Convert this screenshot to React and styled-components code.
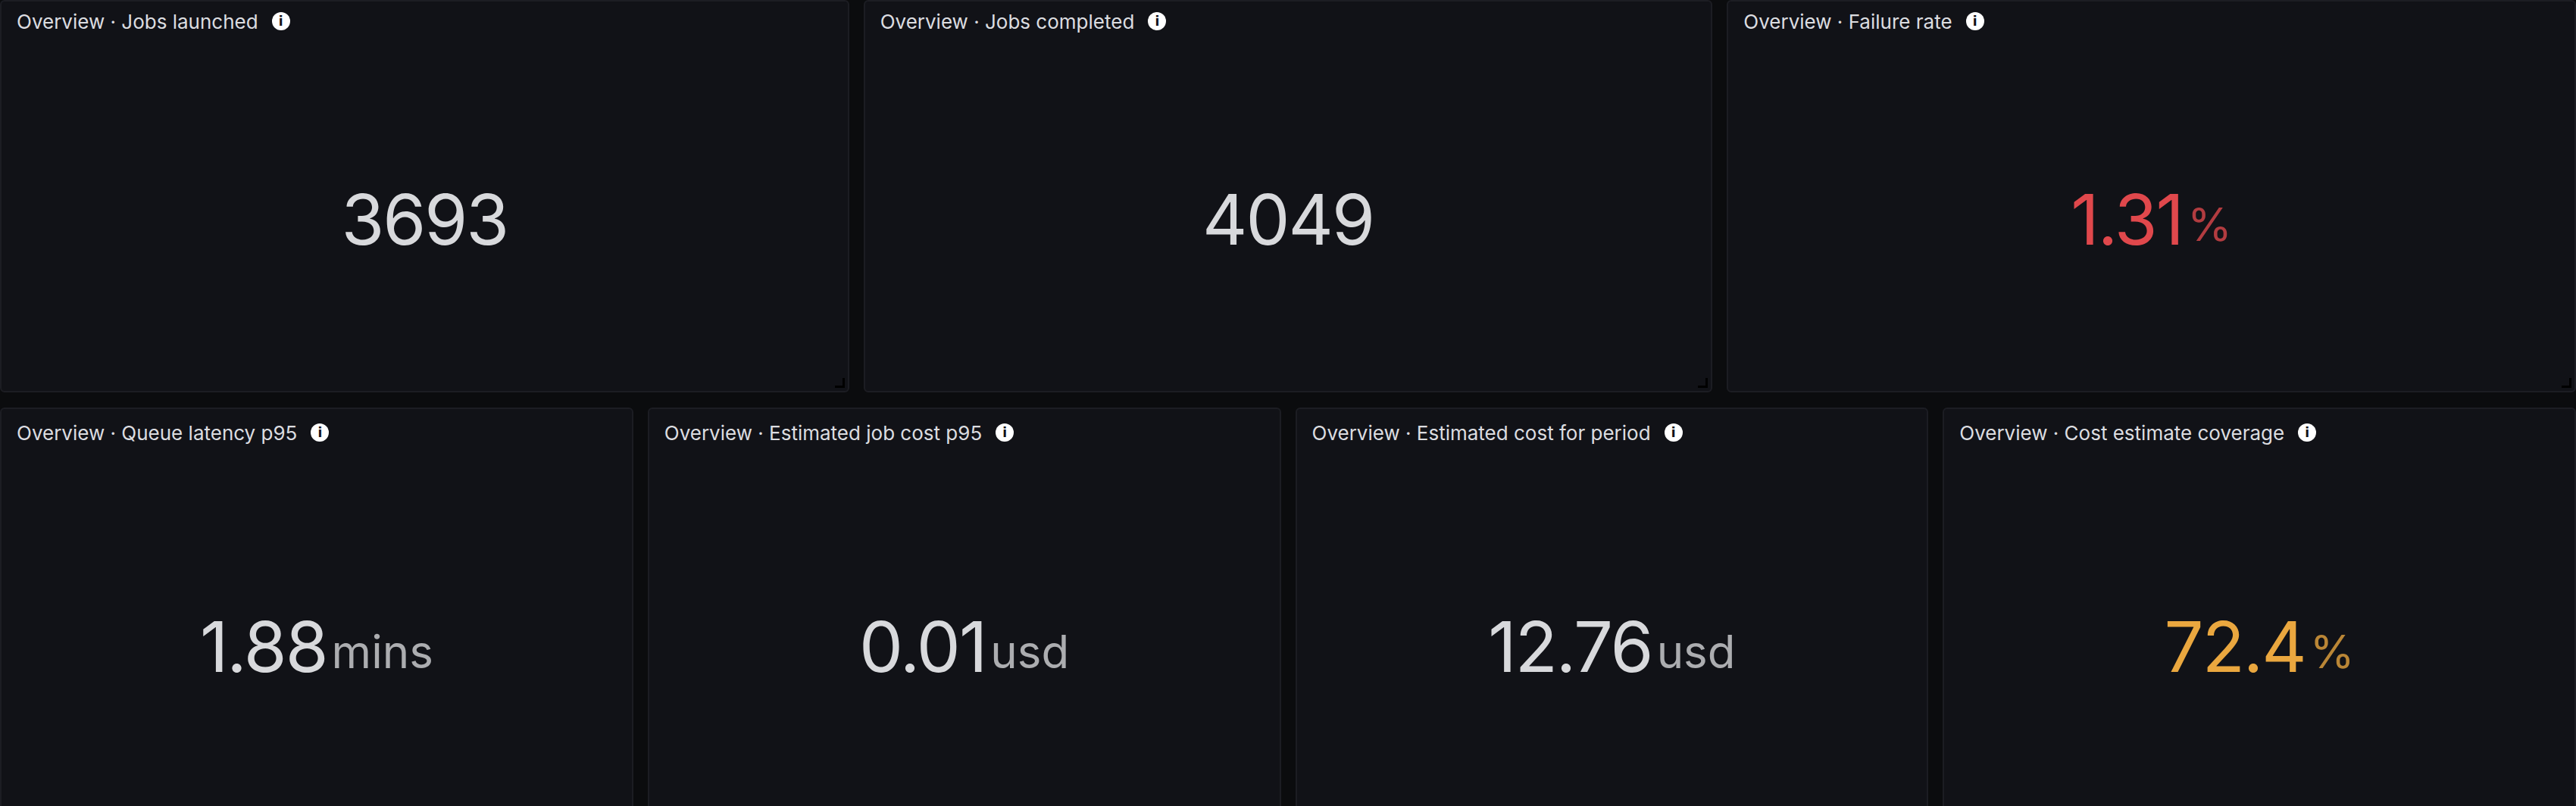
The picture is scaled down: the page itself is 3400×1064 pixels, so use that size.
import React from 'react'
import styled, { createGlobalStyle } from 'styled-components'

const Global = createGlobalStyle`
  html, body { margin: 0; background: #0b0c0e; overflow: hidden; }
  body { font-family: Inter, "Noto Sans", sans-serif; }
`

const Page = styled.div`
  display: flex;
  flex-direction: column;
  gap: 20px;
  width: 3400px;
  height: 1064px;
  overflow: hidden;
`

const Row = styled.div`
  display: grid;
  grid-template-columns: repeat(${p => p.$cols}, 1fr);
  gap: 19px;
  height: ${p => p.$h}px;
  flex-shrink: 0;
`

const Panel = styled.div`
  position: relative;
  display: flex;
  flex-direction: column;
  background: #111217;
  border: 2px solid #1c1d23;
  border-radius: 6px;
  overflow: hidden;
`

const Header = styled.div`
  display: flex;
  align-items: center;
  gap: 18px;
  height: ${p => p.$h}px;
  padding: 0 20px;
  color: #dcdde0;
  font-size: 26px;
  flex-shrink: 0;
`

const Info = styled.span`
  display: inline-flex;
  align-items: center;
  justify-content: center;
  width: 24px;
  height: 24px;
  border-radius: 50%;
  background: #fff;
  color: #111217;
  font-size: 17px;
  font-weight: 800;
  font-family: "DejaVu Sans", sans-serif;
`

const Body = styled.div`
  flex: 1;
  display: flex;
  align-items: center;
  justify-content: center;
  padding-top: ${p => p.$pad}px;
`

const Value = styled.span`
  font-size: 92px;
  line-height: 1;
  color: ${p => p.$color};
  letter-spacing: -2px;
`

const Unit = styled.span`
  font-size: 60px;
  margin-left: 6px;
  margin-top: 12px;
  color: ${p => p.$color};
  opacity: 0.78;
`

const Handle = styled.div`
  position: absolute;
  right: 4px;
  bottom: 4px;
  width: 10px;
  height: 10px;
  border-right: 3px solid #000;
  border-bottom: 3px solid #000;
`

const StatPanel = ({ title, value, unit, color = '#d8d9dc', pad = 0, head = 52 }) => (
  <Panel>
    <Header $h={head}>
      Overview · {title}
      <Info>i</Info>
    </Header>
    <Body $pad={pad}>
      <Value $color={color}>{value}</Value>
      {unit && <Unit $color={color}>{unit}</Unit>}
    </Body>
    <Handle />
  </Panel>
)

export default function App() {
  return (
    <Page>
      <Global />
      <Row $cols={3} $h={518}>
        <StatPanel title="Jobs launched" value="3693" pad={10} />
        <StatPanel title="Jobs completed" value="4049" pad={10} />
        <StatPanel title="Failure rate" value="1.31" unit="%" color="#e0484c" pad={10} />
      </Row>
      <Row $cols={4} $h={570}>
        <StatPanel title="Queue latency p95" value="1.88" unit="mins" head={62} />
        <StatPanel title="Estimated job cost p95" value="0.01" unit="usd" head={62} />
        <StatPanel title="Estimated cost for period" value="12.76" unit="usd" head={62} />
        <StatPanel title="Cost estimate coverage" value="72.4" unit="%" color="#eaa73f" head={62} />
      </Row>
    </Page>
  )
}
